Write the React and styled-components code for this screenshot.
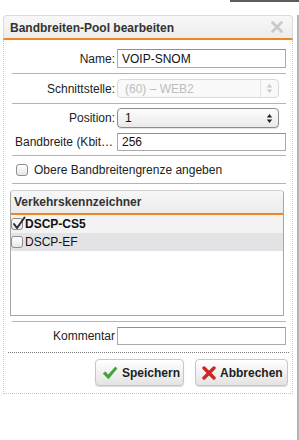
import styled, { createGlobalStyle } from 'styled-components';

const GlobalStyle = createGlobalStyle`
  html, body {
    margin: 0;
    padding: 0;
    background: #fff;
  }
  body {
    font-family: "Liberation Sans", Arial, sans-serif;
    font-size: 12px;
    color: #222;
  }
  * {
    box-sizing: border-box;
  }
`;

const ORANGE = '#ef8423';

const Page = styled.div`
  width: 299px;
  height: 440px;
  display: flex;
  flex-direction: column;
  overflow: hidden;
`;

const TopStrip = styled.div`
  height: 15px;
  display: flex;
  padding-left: 230px;
`;

const TopBar = styled.div`
  flex: 1;
  height: 2px;
  background: #5c5c5c;
`;

const Main = styled.div`
  flex: 1;
  display: flex;
`;

const Rail = styled.div`
  flex: 1;
  margin-left: 4px;
  border-left: 2px solid #b4b4b4;
  padding-top: 23px;
`;

const RailMark = styled.div`
  height: 2px;
  background: ${ORANGE};
`;

const Dialog = styled.div`
  margin-left: 3px;
  width: 290px;
  align-self: flex-start;
  display: flex;
  flex-direction: column;
`;

const TitleBar = styled.div`
  height: 25px;
  display: flex;
  align-items: center;
  justify-content: space-between;
  padding: 0 9px 0 6px;
  border: 1px solid #dadada;
  border-bottom: 2px solid ${ORANGE};
  border-radius: 4px 4px 0 0;
  background: linear-gradient(#f8f8f8, #ececec);
`;

const Title = styled.span`
  font-weight: bold;
  font-size: 12px;
  color: #333;
  padding-top: 1px;
`;

const Body = styled.div`
  border: 1px dotted #c6c6c6;
  border-top: none;
  padding-top: 4px;
`;

const Form = styled.div`
  margin: 0 6px 0 8px;
  display: flex;
  flex-direction: column;
`;

const Row = styled.div`
  display: grid;
  grid-template-columns: 103px 1fr;
  column-gap: 2px;
  align-items: center;
  padding: ${(p) => p.$pad || '5px 0'};
  border-bottom: ${(p) => (p.$sep ? '1px solid #b4b4b4' : 'none')};
`;

const Label = styled.label`
  text-align: right;
  white-space: nowrap;
  overflow: hidden;
  text-overflow: ellipsis;
  padding: 0 0 0 3px;
  color: #222;
`;

const TextInput = styled.input`
  width: 100%;
  height: ${(p) => p.$h || 19}px;
  border: 1px solid #ababab;
  border-top-color: #909090;
  padding: 0 4px;
  font-family: "Liberation Sans", Arial, sans-serif;
  font-size: 12px;
  color: #111;
  background: #fff;
  outline: none;
`;

const Select = styled.div`
  width: 162px;
  height: ${(p) => (p.$disabled ? 19 : 20)}px;
  display: flex;
  align-items: center;
  border: 1px solid ${(p) => (p.$disabled ? '#d9d9d9' : '#8c8c8c')};
  border-radius: 4px;
  background: ${(p) =>
    p.$disabled ? '#f9f9f9' : 'linear-gradient(#fdfdfd, #e9e9e9)'};
  color: ${(p) => (p.$disabled ? '#bdbdbd' : '#111')};
  box-shadow: ${(p) => (p.$disabled ? 'none' : '0 1px 1px rgba(0,0,0,0.12)')};
`;

const SelectValue = styled.span`
  flex: 1;
  padding-left: 7px;
  white-space: nowrap;
`;

const SelectArrows = styled.span`
  width: 18px;
  height: 100%;
  display: flex;
  align-items: center;
  justify-content: center;
  border-left: 1px solid ${(p) => (p.$disabled ? '#e4e4e4' : 'transparent')};
  color: ${(p) => (p.$disabled ? '#c8c8c8' : '#222')};
`;

const CheckRow = styled.div`
  height: 28px;
  display: flex;
  align-items: center;
  gap: 6px;
  padding-left: 4px;
  border-bottom: 1px solid #b4b4b4;
`;

const Box = styled.span`
  position: relative;
  width: 12px;
  height: 12px;
  flex: none;
  border: 1px solid #8e8e8e;
  border-radius: 3px;
  background: linear-gradient(#ffffff, #e6e6e6);
  box-shadow: inset 0 1px 0 #fff;
`;

const Tick = styled.svg`
  position: absolute;
  left: 0px;
  top: -3px;
`;

const Fieldset = styled.div`
  margin: 6px 2px 0 -2px;
  height: 126px;
  display: flex;
  flex-direction: column;
  border: 1px solid #a6a6a6;
  border-top-color: #cfcfcf;
  border-radius: 4px 4px 0 0;
  overflow: hidden;
`;

const FieldsetHeader = styled.div`
  height: 24px;
  flex: none;
  display: flex;
  align-items: center;
  padding: 0 3px;
  font-weight: bold;
  color: #333;
  background: linear-gradient(#f7f7f7, #ebebeb);
  border-bottom: 2px solid ${ORANGE};
`;

const ListRow = styled.div`
  height: 18px;
  display: flex;
  align-items: center;
  gap: 2px;
  padding-left: 0px;
  background: ${(p) => p.$bg};
  font-weight: ${(p) => (p.$bold ? 'bold' : 'normal')};
  color: #111;
`;

const Divider = styled.div`
  margin-top: 5px;
  height: 1px;
  background: #b4b4b4;
`;

const Footer = styled.div`
  margin: 2px 3px 0 4px;
  border-top: 1px dotted #7a7a7a;
  padding: 6px 1px 7px 0;
  display: flex;
  justify-content: flex-end;
  gap: 11px;
`;

const Button = styled.button`
  width: ${(p) => p.$w}px;
  height: 27px;
  display: flex;
  align-items: center;
  gap: 4px;
  padding: 0 0 0 6px;
  font-family: "Liberation Sans", Arial, sans-serif;
  font-size: 12px;
  font-weight: bold;
  color: #1e1e1e;
  border: 1px solid #c6c6c6;
  border-radius: 4px;
  background: linear-gradient(#ffffff, #e3e3e3);
  box-shadow: 0 1px 1px rgba(0, 0, 0, 0.15);
`;

function Arrows({ disabled }) {
  return (
    <SelectArrows $disabled={disabled}>
      <svg width="7" height="11" viewBox="0 0 7 11">
        <path d="M0.8 4.4 L3.5 1 L6.2 4.4 Z" fill="currentColor" />
        <path d="M0.8 6.6 L3.5 10 L6.2 6.6 Z" fill="currentColor" />
      </svg>
    </SelectArrows>
  );
}

function Checkbox({ checked }) {
  return (
    <Box>
      {checked && (
        <Tick width="14" height="14" viewBox="0 0 14 14">
          <path
            d="M2 8 L5 12 L12.5 1.5"
            fill="none"
            stroke="#2b2b3a"
            strokeWidth="2"
            strokeLinecap="round"
            strokeLinejoin="round"
          />
        </Tick>
      )}
    </Box>
  );
}

function CloseIcon() {
  return (
    <svg width="12" height="12" viewBox="0 0 12 12">
      <path
        d="M1.5 1.5 L10.5 10.5 M10.5 1.5 L1.5 10.5"
        stroke="#c9c9c9"
        strokeWidth="2.6"
        strokeLinecap="round"
      />
    </svg>
  );
}

function SaveIcon() {
  return (
    <svg width="16" height="14" viewBox="0 0 16 14">
      <path d="M0.8 7.6 L3.4 5.4 L6.2 8.4 L13.4 0.6 L15.4 2.6 L6.4 13.2 Z" fill="#46a23a" />
    </svg>
  );
}

function CancelIcon() {
  return (
    <svg width="14" height="14" viewBox="0 0 14 14">
      <path
        d="M2 2 L12 12 M12 2 L2 12"
        stroke="#cc2622"
        strokeWidth="3.4"
        strokeLinecap="round"
      />
    </svg>
  );
}

export default function App() {
  return (
    <>
      <GlobalStyle />
      <Page>
        <TopStrip>
          <TopBar />
        </TopStrip>
        <Main>
          <Dialog>
            <TitleBar>
              <Title>Bandbreiten-Pool bearbeiten</Title>
              <CloseIcon />
            </TitleBar>
            <Body>
              <Form>
                <Row $sep>
                  <Label>Name:</Label>
                  <TextInput defaultValue="VOIP-SNOM" />
                </Row>
                <Row $sep $pad="5px 0 5px">
                  <Label>Schnittstelle:</Label>
                  <Select $disabled>
                    <SelectValue>(60) – WEB2</SelectValue>
                    <Arrows disabled />
                  </Select>
                </Row>
                <Row $pad="4px 0 2px">
                  <Label>Position:</Label>
                  <Select>
                    <SelectValue>1</SelectValue>
                    <Arrows />
                  </Select>
                </Row>
                <Row $sep $pad="3px 0 4px">
                  <Label>Bandbreite (Kbit/s):</Label>
                  <TextInput $h={18} defaultValue="256" />
                </Row>
                <CheckRow>
                  <Checkbox />
                  <span>Obere Bandbreitengrenze angeben</span>
                </CheckRow>
                <Fieldset>
                  <FieldsetHeader>Verkehrskennzeichner</FieldsetHeader>
                  <ListRow $bg="#f3f3f3" $bold>
                    <Checkbox checked />
                    DSCP-CS5
                  </ListRow>
                  <ListRow $bg="#e3e3e5">
                    <Checkbox />
                    DSCP-EF
                  </ListRow>
                </Fieldset>
                <Divider />
                <Row $pad="5px 0 5px">
                  <Label>Kommentar</Label>
                  <TextInput $h={18} />
                </Row>
              </Form>
              <Footer>
                <Button $w={89}>
                  <SaveIcon />
                  Speichern
                </Button>
                <Button $w={93}>
                  <CancelIcon />
                  Abbrechen
                </Button>
              </Footer>
            </Body>
          </Dialog>
          <Rail>
            <RailMark />
          </Rail>
        </Main>
      </Page>
    </>
  );
}
